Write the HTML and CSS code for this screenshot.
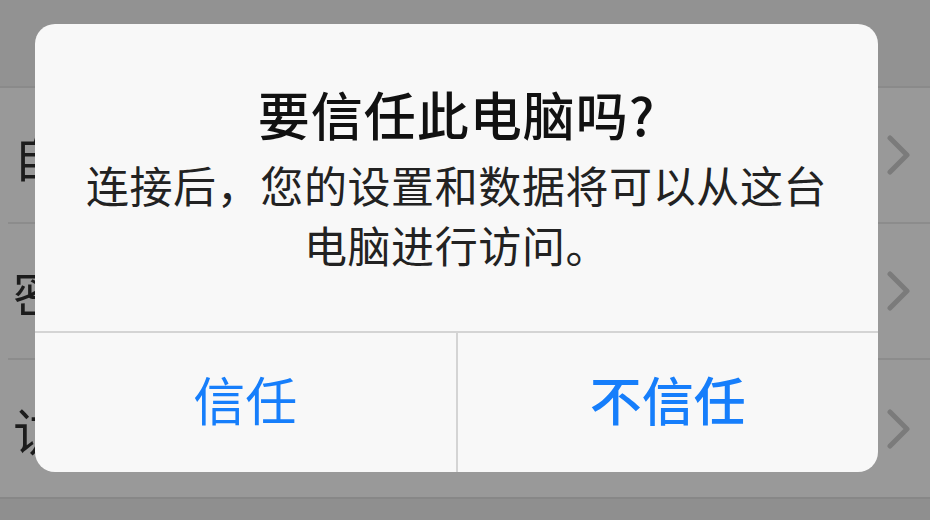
FILE: index.html
```html
<!DOCTYPE html>
<html lang="zh-CN">
<head>
<meta charset="utf-8">
<link rel="stylesheet" href="styles.css">
</head>
<body>
<div class="screen">
  <div class="topbar"></div>
  <div class="list">
    <div class="row"><span class="label">自</span><svg class="chev" viewBox="0 0 26 40" width="26" height="40"><path d="M4 3 L21 20 L4 37" fill="none" stroke="#7b7b7b" stroke-width="5" stroke-linecap="round" stroke-linejoin="round"/></svg></div>
    <div class="row"><span class="label">密</span><svg class="chev" viewBox="0 0 26 40" width="26" height="40"><path d="M4 3 L21 20 L4 37" fill="none" stroke="#7b7b7b" stroke-width="5" stroke-linecap="round" stroke-linejoin="round"/></svg></div>
    <div class="row last"><span class="label">访</span><svg class="chev" viewBox="0 0 26 40" width="26" height="40"><path d="M4 3 L21 20 L4 37" fill="none" stroke="#7b7b7b" stroke-width="5" stroke-linecap="round" stroke-linejoin="round"/></svg></div>
  </div>
  <div class="bottom"></div>

  <div class="alert">
    <div class="alert-body">
      <div class="alert-title">要信任此电脑吗?</div>
      <div class="alert-msg">连接后，您的设置和数据将可以从这台电脑进行访问。</div>
    </div>
    <div class="alert-actions">
      <div class="btn">信任</div>
      <div class="btn btn-strong">不信任</div>
    </div>
  </div>
</div>
</body>
</html>
```

FILE: styles.css
```css
html, body {
  margin: 0;
  padding: 0;
}
body {
  width: 930px;
  height: 520px;
  overflow: hidden;
  background: #999999;
  font-family: "Noto Sans CJK SC", "Noto Sans", sans-serif;
}
.screen {
  position: relative;
  width: 930px;
  height: 520px;
  display: flex;
  flex-direction: column;
}
.topbar {
  height: 86px;
  background: #929292;
  border-bottom: 2px solid #8a8a8a;
  flex: none;
}
.list {
  flex: none;
  background: #999999;
}
.row {
  height: 134px;
  margin-left: 8px;
  padding-left: 5px;
  padding-right: 18px;
  border-bottom: 2px solid #8c8c8c;
  display: flex;
  align-items: center;
  justify-content: space-between;
}
.row.last {
  height: 137px;
  border-bottom: none;
}
.label {
  font-size: 50px;
  line-height: 60px;
  color: #1c1c1c;
  white-space: nowrap;
}
.chev {
  flex: none;
}
.bottom {
  flex: 1;
  background: #8f8f8f;
  border-top: 2px solid #878787;
}
.alert {
  position: absolute;
  left: 35px;
  top: 24px;
  width: 843px;
  height: 448px;
  border-radius: 20px;
  background: #f8f8f8;
  display: flex;
  flex-direction: column;
  overflow: hidden;
}
.alert-body {
  height: 309px;
  box-sizing: border-box;
  padding: 60px 40px 0;
  text-align: center;
  border-bottom: 2px solid #d4d4d4;
  flex: none;
}
.alert-title {
  font-size: 52px;
  line-height: 60px;
  font-weight: 500;
  letter-spacing: 1px;
  color: #111111;
}
.alert-msg {
  margin-top: 10px;
  font-size: 43px;
  line-height: 60px;
  letter-spacing: 0.6px;
  color: #222222;
}
.alert-actions {
  flex: 1;
  display: flex;
}
.btn {
  flex: 1;
  display: flex;
  align-items: center;
  justify-content: center;
  padding-bottom: 8px;
  font-size: 52px;
  color: #167efb;
}
.btn + .btn {
  border-left: 2px solid #d4d4d4;
}
.btn-strong {
  font-weight: 500;
}
```
